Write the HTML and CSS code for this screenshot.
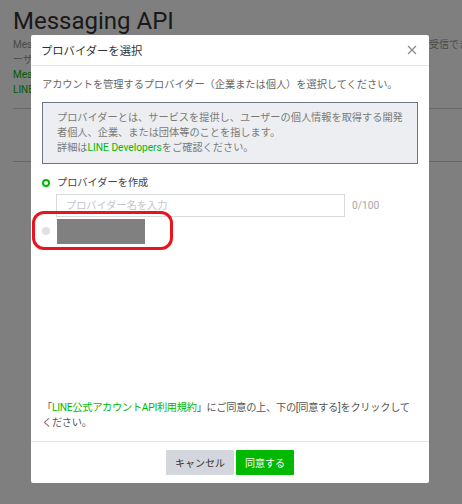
FILE: index.html
```html
<!DOCTYPE html>
<html lang="ja">
<head>
<meta charset="utf-8">
<link rel="stylesheet" href="styles.css">
</head>
<body>
<div class="page">
  <h1 class="page-title">Messaging API</h1>
  <div class="desc-row"><span class="desc-left">Messaging APIを利用すると、ボットからユーザーにメッセージを送信したり、ユーザーからのメッセージを</span><span class="desc-right">受信できます</span></div>
  <div class="desc-row"><span class="desc-left">ーザーとの双方向のコミュニケーションが可能になります。</span></div>
  <div class="link-row">Messaging APIについて</div>
  <div class="link-row">LINE公式アカウントについて</div>
  <hr class="rule rule-a">
  <hr class="rule rule-b">
</div>

<div class="overlay"></div>

<div class="modal">
  <div class="modal-header">
    <span class="modal-title">プロバイダーを選択</span>
    <svg class="close" width="10" height="10" viewBox="0 0 10 10"><path d="M1 1L9 9M9 1L1 9" stroke="#8a8a8a" stroke-width="1.2" fill="none"/></svg>
  </div>
  <div class="modal-body">
    <p class="intro">アカウントを管理するプロバイダー（企業または個人）を選択してください。</p>
    <div class="info">
      <p>プロバイダーとは、サービスを提供し、ユーザーの個人情報を取得する開発者個人、企業、または団体等のことを指します。</p>
      <p>詳細は<span class="green">LINE Developers</span>をご確認ください。</p>
    </div>
    <div class="option">
      <span class="radio radio-on"></span>
      <span class="option-label">プロバイダーを作成</span>
    </div>
    <div class="input-row">
      <div class="text-input">プロバイダー名を入力</div>
      <span class="counter">0/100</span>
    </div>
    <div class="option option-2">
      <span class="radio radio-off"></span>
      <span class="redact"></span>
      <span class="highlight"></span>
    </div>
    <p class="terms">「<span class="green">LINE公式アカウントAPI利用規約</span>」にご同意の上、下の[同意する]をクリックしてください。</p>
  </div>
  <div class="modal-footer">
    <button class="btn btn-cancel">キャンセル</button>
    <button class="btn btn-ok">同意する</button>
  </div>
</div>
</body>
</html>
```

FILE: styles.css
```css
html, body {
  margin: 0;
  padding: 0;
}
body {
  width: 462px;
  height: 504px;
  overflow: hidden;
  position: relative;
  background: #fff;
  font-family: Roboto, "Noto Sans CJK JP", sans-serif;
}
.page {
  padding: 7px 0 0 13px;
}
.page-title {
  margin: 0;
  font-size: 24px;
  font-weight: 400;
  color: #333;
  line-height: 28px;
}
.desc-row {
  display: flex;
  width: 449px;
  white-space: nowrap;
  overflow: hidden;
  font-size: 10px;
  line-height: 15px;
  color: #949494;
}
.desc-row:first-of-type {
  margin-top: 2px;
}
.desc-left {
  flex: 1;
  min-width: 0;
  overflow: hidden;
}
.desc-right {
  flex: 0 0 33px;
  overflow: hidden;
}
.link-row {
  font-size: 10px;
  line-height: 15px;
  color: #00b900;
  white-space: nowrap;
}
.rule {
  border: 0;
  border-top: 1px solid #ccc;
  margin: 0;
  width: 100%;
}
.rule-a {
  margin-top: 11px;
}
.rule-b {
  margin-top: 52px;
}
.overlay {
  position: absolute;
  inset: 0;
  background: rgba(0, 0, 0, 0.5);
}
.modal {
  position: absolute;
  left: 31px;
  top: 35px;
  width: 398px;
  height: 448px;
  background: #fff;
  border-radius: 2px;
  display: flex;
  flex-direction: column;
  box-sizing: border-box;
}
.modal-header {
  height: 30px;
  flex-shrink: 0;
  display: flex;
  align-items: center;
  justify-content: space-between;
  padding: 0 12px 0 10px;
  border-bottom: 1px solid #e6e6e6;
}
.modal-title {
  font-size: 11.3px;
  color: #333;
}
.close {
  display: block;
}
.modal-body {
  flex: 1;
  display: flex;
  flex-direction: column;
  padding: 11px 11px 11px 11px;
  font-size: 10.2px;
  line-height: 15px;
  color: #666;
}
.intro {
  margin: 0;
}
.info {
  margin-top: 10px;
  border: 1px solid #6e7385;
  background: #eceef1;
  padding: 7px 14px 8px 14px;
  color: #7a7a7a;
}
.info p {
  margin: 0;
}
.green {
  color: #00b900;
}
.option {
  display: flex;
  align-items: center;
  margin-top: 11px;
  height: 15px;
  color: #444;
}
.radio {
  width: 8px;
  height: 8px;
  border-radius: 50%;
  box-sizing: border-box;
  flex-shrink: 0;
}
.radio-on {
  border: 2.5px solid #00b900;
  background: #fff;
}
.radio-off {
  background: #dde0e5;
}
.option-label {
  margin-left: 7px;
}
.input-row {
  display: flex;
  align-items: center;
  margin-top: 4px;
  padding-left: 14px;
}
.text-input {
  width: 289px;
  height: 23px;
  box-sizing: border-box;
  border: 1px solid #d6d9de;
  padding-left: 9px;
  line-height: 21px;
  color: #c4c6ca;
}
.counter {
  margin-left: 7px;
  color: #a6a6a6;
}
.option-2 {
  position: relative;
  margin-top: 1px;
  height: 26px;
}
.redact {
  width: 88px;
  height: 25px;
  background: #808080;
  margin-left: 7px;
}
.highlight {
  position: absolute;
  left: -10px;
  top: -7px;
  width: 141px;
  height: 39px;
  box-sizing: border-box;
  border: 3.5px solid #e8141e;
  border-radius: 12px;
}
.terms {
  margin: auto 0 0 0;
  letter-spacing: -0.25px;
  color: #555;
}
.modal-footer {
  height: 42px;
  flex-shrink: 0;
  border-top: 1px solid #e6e6e6;
  box-sizing: border-box;
  display: flex;
  justify-content: center;
  align-items: center;
  gap: 2px;
  padding-bottom: 1px;
}
.btn {
  border: 0;
  border-radius: 1px;
  height: 25px;
  font-family: inherit;
  font-size: 10px;
  padding: 0;
}
.btn-cancel {
  width: 68px;
  background: #d3d7dd;
  color: #333;
}
.btn-ok {
  width: 58px;
  background: #00b900;
  color: #fff;
}
```
